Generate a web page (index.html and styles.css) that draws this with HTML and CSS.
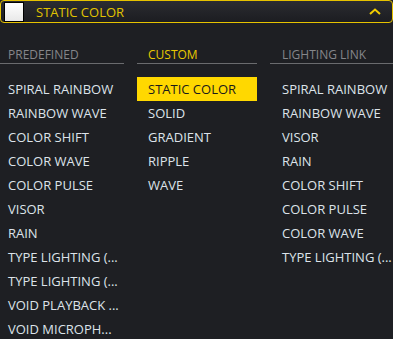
FILE: index.html
```html
<!DOCTYPE html>
<html>
<head>
<meta charset="utf-8">
<link rel="stylesheet" href="styles.css">
</head>
<body>
<div class="panel">
  <div class="header">
    <span class="swatch"></span>
    <span class="title">STATIC COLOR</span>
    <svg class="chev" width="12" height="7" viewBox="0 0 12 7"><path d="M1 6 L6 1.5 L11 6" fill="none" stroke="#f2cd00" stroke-width="2"/></svg>
  </div>
  <div class="cols">
    <div class="col col-left">
      <div class="col-head">PREDEFINED</div>
      <ul class="list">
        <li>SPIRAL RAINBOW</li>
        <li>RAINBOW WAVE</li>
        <li>COLOR SHIFT</li>
        <li>COLOR WAVE</li>
        <li>COLOR PULSE</li>
        <li>VISOR</li>
        <li>RAIN</li>
        <li>TYPE LIGHTING (...</li>
        <li>TYPE LIGHTING (...</li>
        <li>VOID PLAYBACK ...</li>
        <li>VOID MICROPH...</li>
      </ul>
    </div>
    <div class="col col-mid">
      <div class="col-head active">CUSTOM</div>
      <ul class="list">
        <li class="selected">STATIC COLOR</li>
        <li>SOLID</li>
        <li>GRADIENT</li>
        <li>RIPPLE</li>
        <li>WAVE</li>
      </ul>
    </div>
    <div class="col col-right">
      <div class="col-head">LIGHTING LINK</div>
      <ul class="list">
        <li>SPIRAL RAINBOW</li>
        <li>RAINBOW WAVE</li>
        <li>VISOR</li>
        <li>RAIN</li>
        <li>COLOR SHIFT</li>
        <li>COLOR PULSE</li>
        <li>COLOR WAVE</li>
        <li>TYPE LIGHTING (...</li>
      </ul>
    </div>
  </div>
</div>
</body>
</html>
```

FILE: styles.css
```css
html, body {
  margin: 0;
  padding: 0;
  background: #1e1f23;
  overflow: hidden;
}
.panel {
  width: 393px;
  height: 339px;
  background: #1e1f23;
  font-family: "Open Sans", sans-serif;
}
.header {
  box-sizing: border-box;
  height: 23px;
  border: 1px solid #e6c200;
  border-radius: 4px;
  background: linear-gradient(#2b2c31, #1c1d21);
  display: flex;
  align-items: center;
  padding: 0 11px 0 3px;
}
.swatch {
  box-sizing: border-box;
  width: 20px;
  height: 20px;
  border: 1px solid #000;
  background: linear-gradient(#ffffff, #e8e8e8);
}
.title {
  margin-left: 12px;
  color: #e2c400;
  font-size: 13px;
  flex: 1;
}
.chev {
  display: block;
}
.cols {
  display: grid;
  grid-template-columns: 124px 120px 124px;
  column-gap: 13px;
  padding-top: 23px;
}
.col-head {
  font-size: 12px;
  color: #85868a;
  height: 17px;
  line-height: 17px;
  border-bottom: 1px solid #6a6b6e;
  font-weight: 500;
}
.col-head.active {
  color: #e8c800;
}
.col-left .col-head, .col-left li { padding-left: 8px; }
.col-mid .col-head, .col-mid li { padding-left: 11px; }
.col-right .col-head, .col-right li { padding-left: 12px; }
.list {
  list-style: none;
  margin: 0;
  padding: 13px 0 0;
}
.list li {
  height: 24px;
  line-height: 24px;
  font-size: 13px;
  color: #dde3ea;
  white-space: nowrap;
}
.list li.selected {
  background: #ffd800;
  color: #1a1a1a;
}
```
